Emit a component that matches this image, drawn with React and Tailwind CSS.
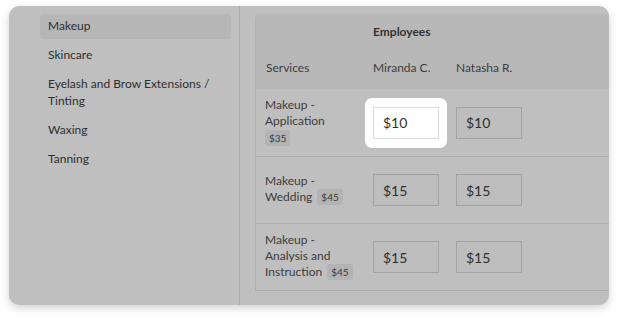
import { useState } from "react";

const categories = [
    "Makeup",
    "Skincare",
    "Eyelash and Brow Extensions / Tinting",
    "Waxing",
    "Tanning",
];

const services = [
    { name: ["Makeup -", "Application"], price: "$35", badgeOwnLine: true, rates: ["$10", "$10"] },
    { name: ["Makeup -", "Wedding"], price: "$45", rates: ["$15", "$15"] },
    { name: ["Makeup -", "Analysis and", "Instruction"], price: "$45", rates: ["$15", "$15"] },
];

const Badge = ({ children }) => (
    <span className="inline-block rounded-[3px] bg-[#b3b3b3] px-[4px] text-[10px] leading-[16px] text-[#3a3a3a]">
        {children}
    </span>
);

const RateInput = ({ value, highlighted }) => {
    if (highlighted) {
        return (
            <div className="relative w-[66px]">
                {/* spotlight cut out of the overlay */}
                <div className="absolute -inset-x-[8px] -inset-y-[9px] rounded-[7px] bg-white" />
                <div className="relative flex h-[32px] w-[66px] items-center border border-[#dcdcdc] bg-white pl-[9px] text-[14px] text-[#333]">
                    {value}
                </div>
            </div>
        );
    }
    return (
        <div className="flex h-[32px] w-[66px] items-center border border-[#a3a3a3] bg-[#bdbdbd] pl-[9px] text-[14px] text-[#2f2f2f]">
            {value}
        </div>
    );
};

export default function App() {
    const [active] = useState(0);

    return (
        <div className="bg-white pt-[6px] pb-[13px] px-[9px]" style={{ fontFamily: "Lato, 'Open Sans', sans-serif" }}>
            <div className="flex h-[299px] overflow-hidden rounded-[10px] bg-[#bfbfbf] shadow-[0_3px_8px_rgba(0,0,0,0.18)]">
                {/* Category sidebar */}
                <div className="w-[231px] shrink-0 border-r border-[#acacac] pt-[8px] pl-[31px] pr-[8px]">
                    <ul className="flex flex-col gap-[4px]">
                        {categories.map((c, i) => (
                            <li
                                key={c}
                                className={`rounded-[4px] px-[8px] pt-[3px] pb-[5px] text-[12px] leading-[17px] text-[#2e2e2e] ${i === active ? "bg-[#b6b6b6]" : ""}`}
                            >
                                {c}
                            </li>
                        ))}
                    </ul>
                </div>

                {/* Rates table */}
                <div className="flex-1 min-w-0 pl-[15px] pt-[8px]">
                    <div className="w-[420px] rounded-tl-[5px] border-l border-b border-[#b0b0b0] text-[12px] text-[#3c3c3c]">
                        <div className="rounded-tl-[5px] bg-[#b8b8b8] h-[75px] grid grid-cols-[108px_83px_83px_1fr]">
                            <div className="col-start-2 col-span-2 pl-[9px] pt-[9px] font-bold text-[#333]">Employees</div>
                            <div className="col-start-1 row-start-2 pl-[10px] pb-[12px] self-end">Services</div>
                            <div className="row-start-2 pl-[9px] pb-[12px] self-end">Miranda C.</div>
                            <div className="row-start-2 pl-[9px] pb-[12px] self-end">Natasha R.</div>
                        </div>
                        {services.map((s, i) => (
                            <div
                                key={i}
                                className={`grid h-[67px] grid-cols-[108px_83px_83px_1fr] items-center ${i > 0 ? "border-t border-[#b0b0b0]" : ""}`}
                            >
                                <div className="pl-[9px] leading-[16px] -mt-[2px]">
                                    {s.name.map((line, j) => (
                                        <div key={j}>
                                            {line}
                                            {j === s.name.length - 1 && !s.badgeOwnLine && (
                                                <span className="ml-[5px]"><Badge>{s.price}</Badge></span>
                                            )}
                                        </div>
                                    ))}
                                    {s.badgeOwnLine && (
                                        <div className="mt-[1px]"><Badge>{s.price}</Badge></div>
                                    )}
                                </div>
                                {s.rates.map((r, j) => (
                                    <div key={j} className="pl-[9px]">
                                        <RateInput value={r} highlighted={i === 0 && j === 0} />
                                    </div>
                                ))}
                                <div />
                            </div>
                        ))}
                    </div>
                </div>
            </div>
        </div>
    );
}
